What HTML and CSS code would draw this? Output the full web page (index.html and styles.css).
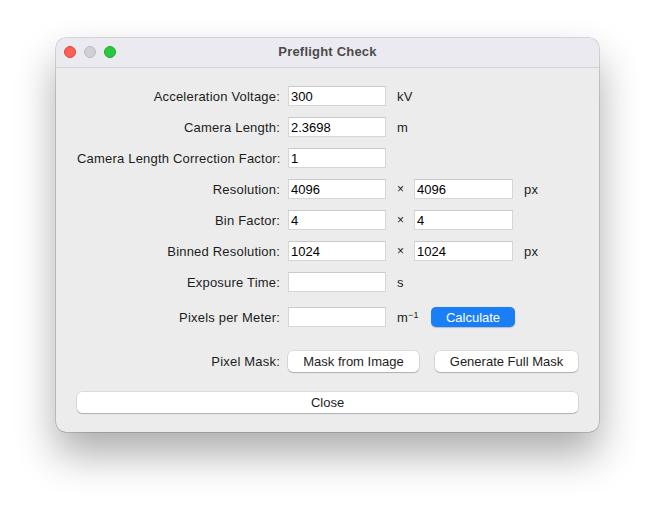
FILE: index.html
```html
<!DOCTYPE html>
<html lang="en">

<head>
    <meta charset="UTF-8">
    <meta name="viewport" content="width=device-width, initial-scale=1.0">
    <title>Preflight Check</title>
    <link rel="stylesheet" href="styles.css">
</head>

<body>
    <div class="window">
        <div class="titlebar">
            <div class="lights">
                <span class="light red"></span>
                <span class="light grey"></span>
                <span class="light green"></span>
            </div>
            <div class="title">Preflight Check</div>
        </div>

        <div class="content">
            <div class="row">
                <label class="label">Acceleration Voltage:</label>
                <input class="field" type="text" value="300">
                <span class="unit">kV</span>
            </div>
            <div class="row">
                <label class="label">Camera Length:</label>
                <input class="field" type="text" value="2.3698">
                <span class="unit">m</span>
            </div>
            <div class="row">
                <label class="label">Camera Length Correction Factor:</label>
                <input class="field" type="text" value="1">
            </div>
            <div class="row">
                <label class="label">Resolution:</label>
                <input class="field" type="text" value="4096">
                <span class="times">×</span>
                <input class="field" type="text" value="4096">
                <span class="unit">px</span>
            </div>
            <div class="row">
                <label class="label">Bin Factor:</label>
                <input class="field" type="text" value="4">
                <span class="times">×</span>
                <input class="field" type="text" value="4">
            </div>
            <div class="row">
                <label class="label">Binned Resolution:</label>
                <input class="field" type="text" value="1024">
                <span class="times">×</span>
                <input class="field" type="text" value="1024">
                <span class="unit">px</span>
            </div>
            <div class="row">
                <label class="label">Exposure Time:</label>
                <input class="field" type="text" value="">
                <span class="unit">s</span>
            </div>
            <div class="row row-ppm">
                <label class="label">Pixels per Meter:</label>
                <input class="field" type="text" value="">
                <span class="unit">m<sup>−1</sup></span>
                <button class="btn btn-blue">Calculate</button>
            </div>
            <div class="row row-mask">
                <label class="label">Pixel Mask:</label>
                <div class="mask-buttons">
                    <button class="btn btn-mask">Mask from Image</button>
                    <button class="btn btn-full">Generate Full Mask</button>
                </div>
            </div>
            <button class="btn btn-close">Close</button>
        </div>
    </div>
</body>

</html>
```

FILE: styles.css
```css
* {
    margin: 0;
    padding: 0;
    box-sizing: border-box;
}

html {
    background-color: #fff;
}

body {
    min-height: 506px;
    font-family: "Liberation Sans", Arial, sans-serif;
    font-size: 13px;
    letter-spacing: 0.2px;
    color: #1d1d1d;
    padding-top: 38px;
    padding-bottom: 60px;
}

.window {
    width: 543px;
    height: 394px;
    margin: 0 auto;
    background: #ececec;
    border-radius: 10px;
    overflow: hidden;
    box-shadow: 0 0 0 0.5px rgba(0, 0, 0, 0.28), 0 22px 42px rgba(0, 0, 0, 0.33);
}

/* title bar */
.titlebar {
    position: relative;
    height: 30px;
    background: #ebeaf0;
    border-bottom: 1px solid #d3d2d6;
    display: flex;
    align-items: center;
    justify-content: center;
}

.lights {
    position: absolute;
    left: 8px;
    top: 8px;
    display: flex;
    gap: 8px;
}

.light {
    width: 12px;
    height: 12px;
    border-radius: 50%;
}

.red {
    background: #fe5f57;
    border: 0.5px solid #e0443e;
}

.grey {
    background: #d0cfd5;
    border: 0.5px solid #bdbcc2;
}

.green {
    background: #28c840;
    border: 0.5px solid #1aab29;
}

.title {
    font-weight: bold;
    color: #4b4b4b;
    padding-bottom: 3px;
}

/* form */
.content {
    display: flex;
    flex-direction: column;
    gap: 11px;
    padding: 18px 21px 0 21px;
}

.row {
    display: grid;
    grid-template-columns: 211px 98px 28px 99px 1fr;
    align-items: center;
    height: 20px;
}

.label {
    text-align: right;
    padding-right: 8px;
    white-space: nowrap;
}

.field {
    height: 20px;
    border: 1px solid #d6d6d6;
    border-top-color: #c9c9c9;
    background: #fff;
    font: inherit;
    color: #000;
    padding: 0 2px;
    outline: none;
}

.unit {
    padding-left: 11px;
    color: #222;
}

.unit sup {
    font-size: 9px;
    vertical-align: 4px;
}

.times {
    text-align: center;
    font-size: 12px;
    padding-left: 1px;
}

.row-ppm {
    margin-top: 4px;
}

.row-mask {
    margin-top: 13px;
    height: 21px;
}

.mask-buttons {
    grid-column: 2 / 6;
    display: flex;
    gap: 16px;
}

.btn {
    height: 20px;
    border: none;
    border-radius: 5px;
    background: #fff;
    font: inherit;
    color: #1d1d1d;
    box-shadow: 0 0 0 0.5px rgba(0, 0, 0, 0.14), 0 1px 1px rgba(0, 0, 0, 0.2);
}

.btn-blue {
    width: 84px;
    margin-left: 17px;
    background: #1a7ff6;
    color: #fff;
    box-shadow: 0 0.5px 1px rgba(0, 0, 0, 0.2);
}

.btn-mask {
    width: 131px;
    height: 21px;
}

.btn-full {
    width: 143px;
    height: 21px;
}

.btn-close {
    height: 21px;
    margin-top: 9px;
}
```
